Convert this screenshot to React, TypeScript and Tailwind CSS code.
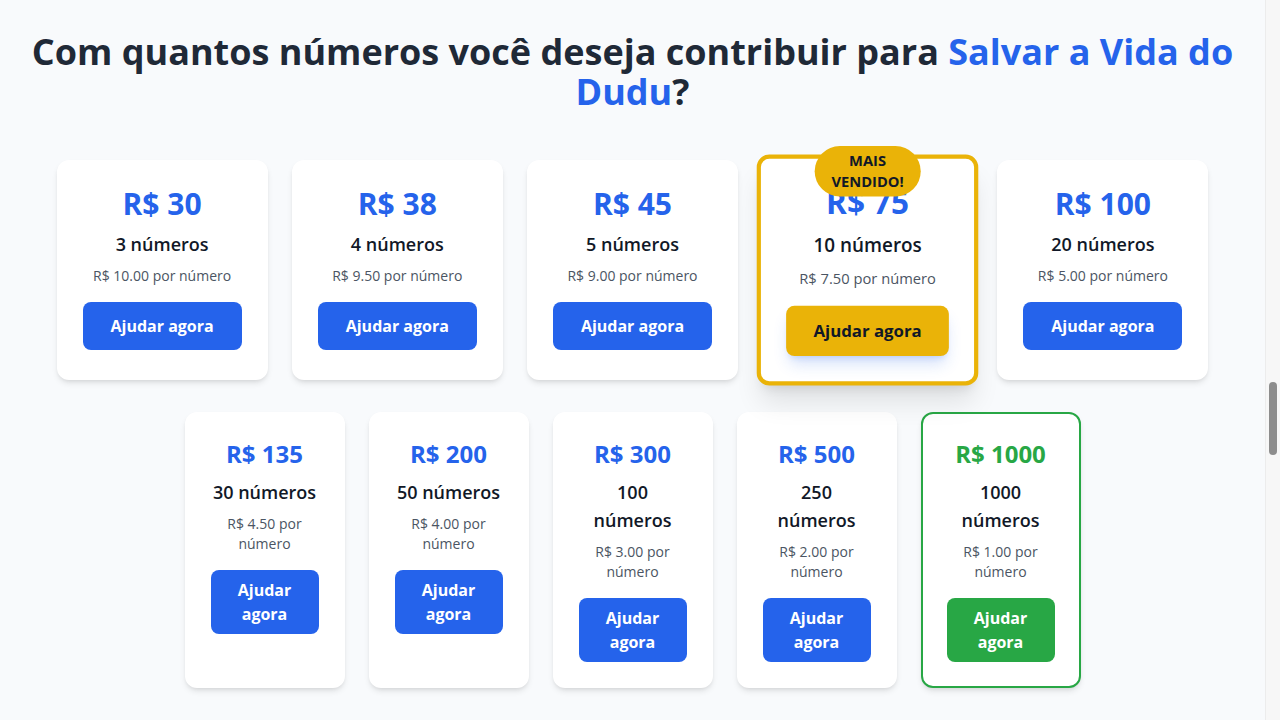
interface Pack {
  price: number;
  qty: number;
  unit: string;
}

const topPacks: Pack[] = [
  { price: 30, qty: 3, unit: '10.00' },
  { price: 38, qty: 4, unit: '9.50' },
  { price: 45, qty: 5, unit: '9.00' },
  { price: 75, qty: 10, unit: '7.50' },
  { price: 100, qty: 20, unit: '5.00' },
];

const bottomPacks: Pack[] = [
  { price: 135, qty: 30, unit: '4.50' },
  { price: 200, qty: 50, unit: '4.00' },
  { price: 300, qty: 100, unit: '3.00' },
  { price: 500, qty: 250, unit: '2.00' },
  { price: 1000, qty: 1000, unit: '1.00' },
];

function TopCard({ pack }: { pack: Pack }) {
  const featured = pack.qty === 10;
  return (
    <div
      className={
        featured
          ? 'relative bg-white rounded-xl border-4 border-[#eab308] shadow-xl scale-105 p-6 text-center'
          : 'relative bg-white rounded-xl border-2 border-transparent shadow-md p-6 text-center'
      }
    >
      {featured && (
        <div className="absolute -top-3 left-1/2 -translate-x-1/2 bg-[#eab308] text-[#111827] text-sm font-bold px-4 py-1 rounded-full">
          MAIS VENDIDO!
        </div>
      )}
      <div className="text-3xl font-bold text-[#2563eb] mb-2">R$ {pack.price}</div>
      <div className="text-lg font-semibold text-[#111827] mb-2">{pack.qty} números</div>
      <div className="text-sm text-[#4b5563] mb-4">R$ {pack.unit} por número</div>
      <button
        className={
          featured
            ? 'w-full bg-[#eab308] text-[#111827] font-bold py-3 px-4 rounded-lg shadow-lg shadow-[#2563eb]/20'
            : 'w-full bg-[#2563eb] text-white font-bold py-3 px-4 rounded-lg'
        }
      >
        Ajudar agora
      </button>
    </div>
  );
}

function BottomCard({ pack }: { pack: Pack }) {
  const top = pack.qty === 1000;
  return (
    <div
      className={
        top
          ? 'bg-white rounded-xl border-2 border-[#28a745] shadow-md p-6 text-center'
          : 'bg-white rounded-xl border-2 border-transparent shadow-md p-6 text-center'
      }
    >
      <div className={top ? 'text-2xl font-bold text-[#28a745] mb-2' : 'text-2xl font-bold text-[#2563eb] mb-2'}>
        R$ {pack.price}
      </div>
      <div className="text-lg font-semibold text-[#111827] mb-2">{pack.qty} números</div>
      <div className="text-sm text-[#4b5563] mb-4">R$ {pack.unit} por número</div>
      <button
        className={
          top
            ? 'w-full bg-[#28a745] text-white font-bold py-2 px-2 rounded-lg'
            : 'w-full bg-[#2563eb] text-white font-bold py-2 px-2 rounded-lg'
        }
      >
        Ajudar agora
      </button>
    </div>
  );
}

export default function App() {
  return (
    <div
      className="flex h-screen overflow-hidden bg-[#f8fafc] text-[#111827]"
      style={{ fontFamily: '"Open Sans", "Noto Sans", sans-serif' }}
    >
      <main className="flex-1 overflow-hidden">
        <section className="px-4 pt-8 pb-16">
          <h2 className="text-4xl font-bold text-[#1f2937] text-center mb-12">
            Com quantos números você deseja contribuir para{' '}
            <span className="text-[#2563eb]">Salvar a Vida do Dudu</span>?
          </h2>

          <div className="max-w-6xl mx-auto grid grid-cols-5 gap-6 mb-8">
            {topPacks.map((p) => (
              <TopCard key={p.qty} pack={p} />
            ))}
          </div>

          <div className="max-w-4xl mx-auto grid grid-cols-5 gap-6">
            {bottomPacks.map((p) => (
              <BottomCard key={p.qty} pack={p} />
            ))}
          </div>
        </section>
      </main>

      {/* page scrollbar */}
      <div className="w-[15px] shrink-0 bg-[#f7f7f7] border-l border-[#ececec]">
        <div className="mt-[382px] ml-[3px] w-[8px] h-[73px] rounded-full bg-[#8d8d8d]"></div>
      </div>
    </div>
  );
}
